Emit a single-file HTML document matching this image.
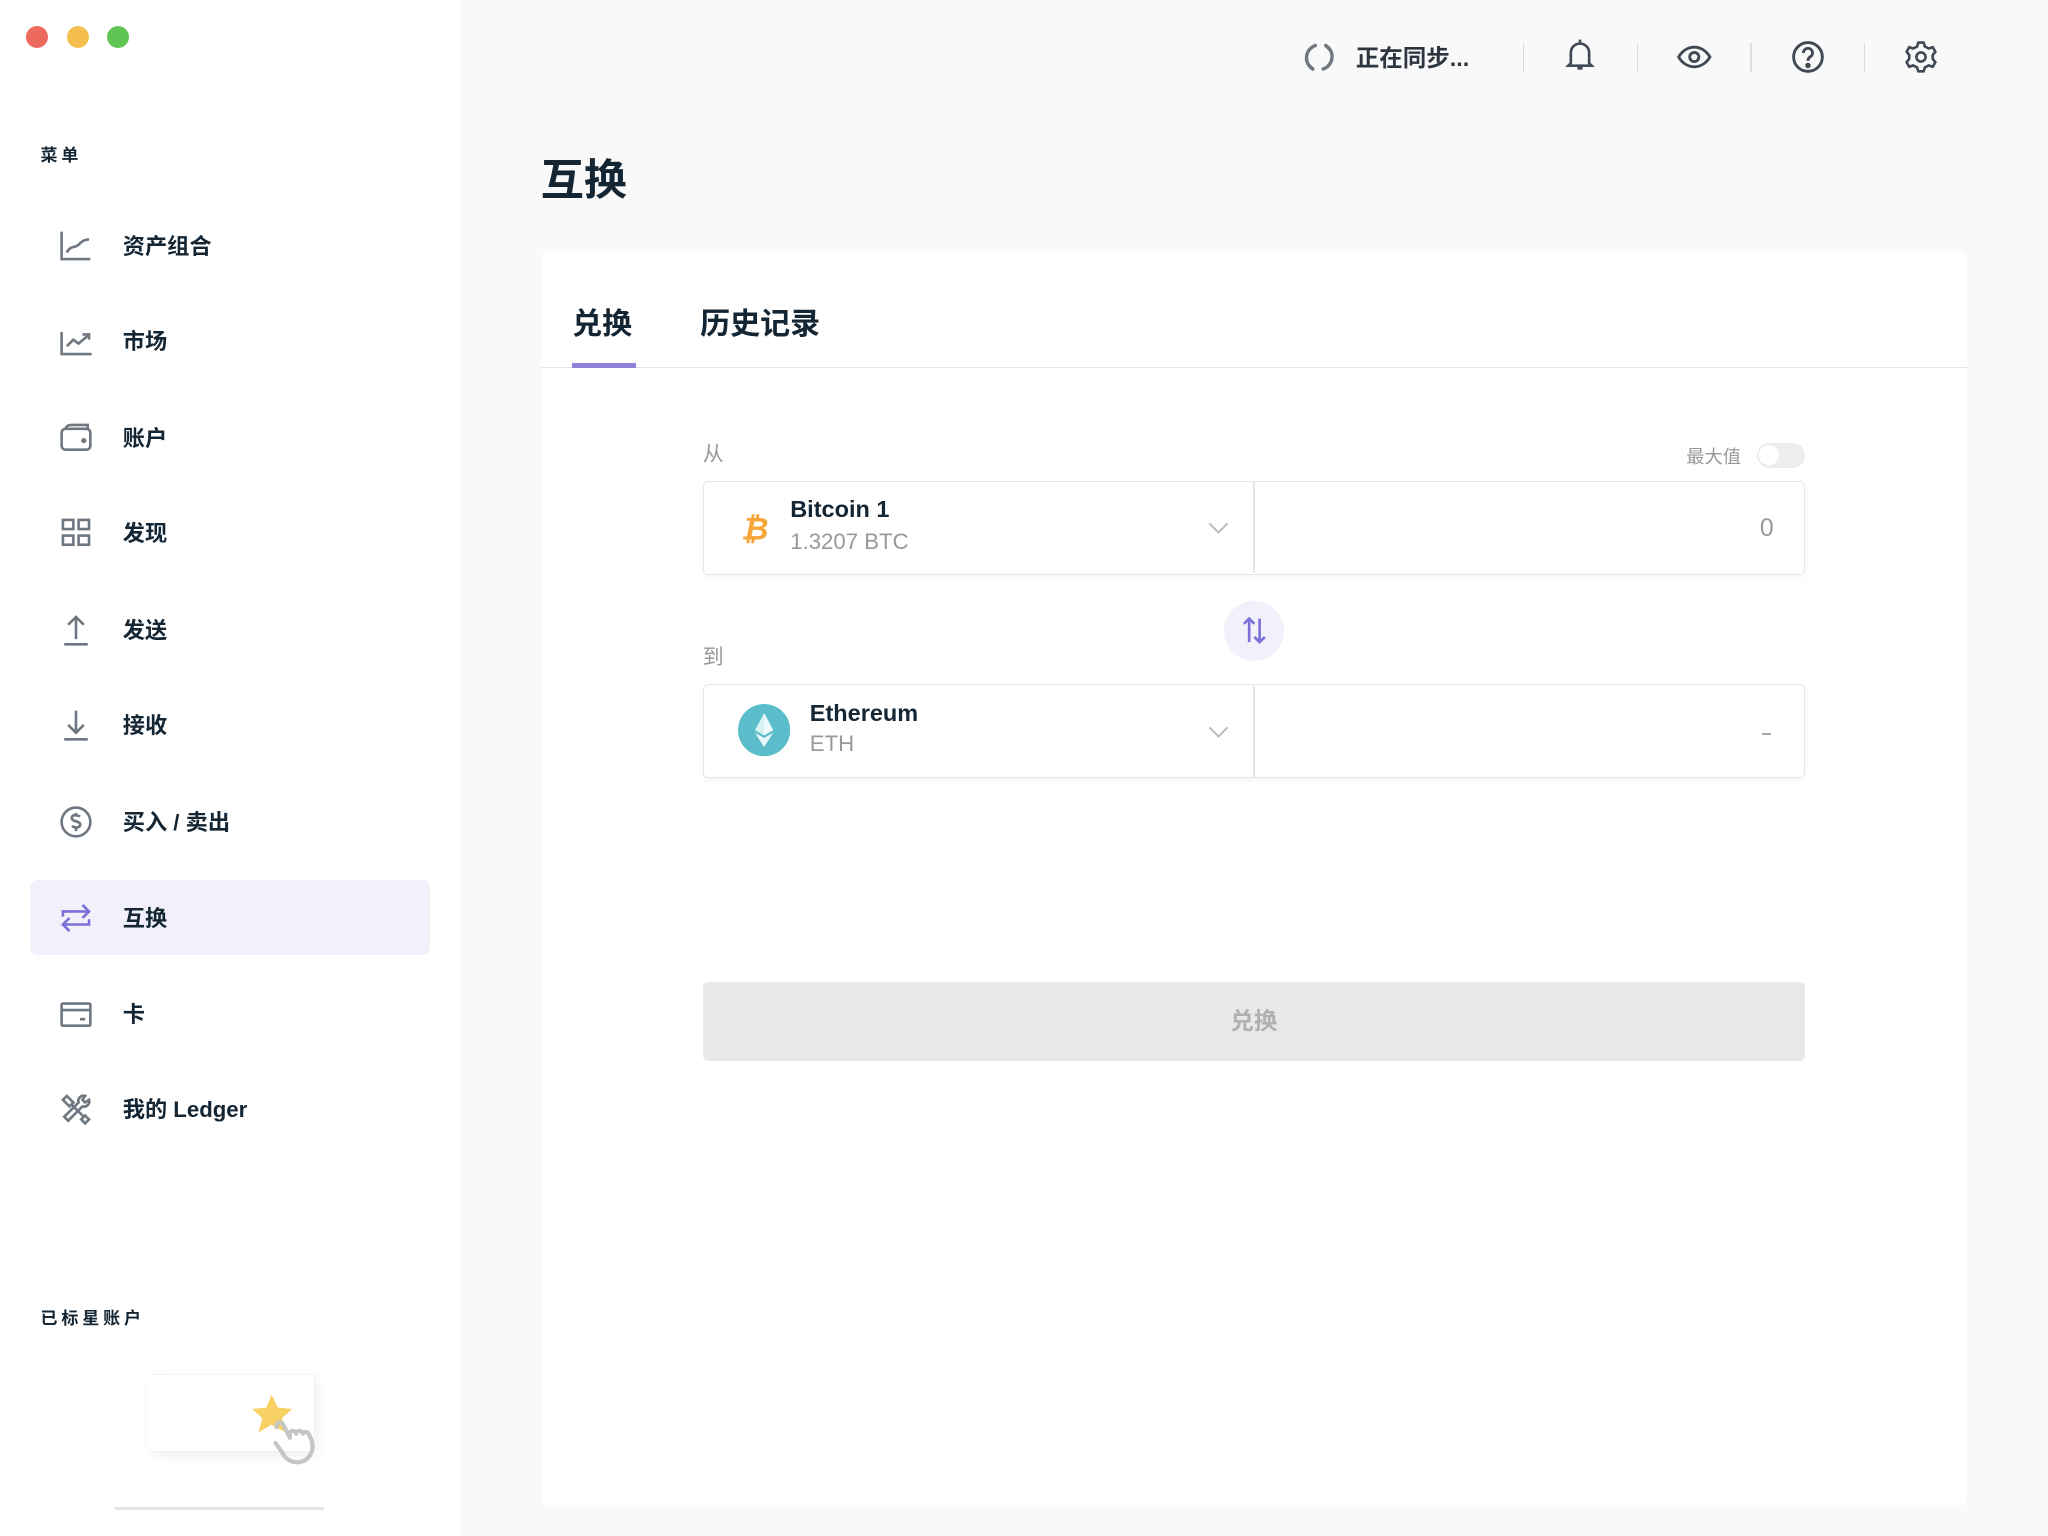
<!DOCTYPE html>
<html><head><meta charset="utf-8">
<style>
*{margin:0;padding:0;box-sizing:border-box}
html,body{width:2048px;height:1536px;overflow:hidden;background:#fff}
#w{zoom:1.306122;width:1568px;height:1176px;position:relative;background:#f9f9f9;font-family:"Liberation Sans","Noto Sans CJK SC",sans-serif;color:#142533}
.a{position:absolute}
#side{left:0;top:0;width:352px;height:1176px;background:#fff}
.dot{width:17px;height:17px;border-radius:50%;top:20px}
.cap{font-size:13px;font-weight:700;letter-spacing:3px;color:#142533}
.nav{left:23px;width:306px;height:57px;border-radius:6px}
.nav svg{position:absolute;left:22px;top:16px}
.nav span{position:absolute;left:71px;top:16px;font-size:17px;font-weight:600;color:#142533}
.act{background:#f1f0fb}
.sep{width:1px;height:22px;background:#ddd;top:33px}
.ic{top:30px}
.lbl{font-size:16px;color:#999}
.box{background:#fff;border:1px solid #e6e6e6;border-radius:4px;box-shadow:0 2px 4px rgba(0,0,0,.04)}
</style></head><body><div id="w">
<div id="side" class="a">
 <div class="a dot" style="left:20px;background:#ee6a5f"></div>
 <div class="a dot" style="left:51px;background:#f5bf4f"></div>
 <div class="a dot" style="left:82px;background:#61c554"></div>
 <div class="a cap" style="left:31px;top:108px">菜单</div>

 <div class="a nav" style="top:159px"><svg width="26" height="26" viewBox="0 0 26 26" fill="none" stroke="#6f7780" stroke-width="2"><path d="M2 2v21h22M6 18c3-6 6-3 9-6s5-4 8-4"/></svg><span>资产组合</span></div>
 <div class="a nav" style="top:232px"><svg width="26" height="26" viewBox="0 0 26 26" fill="none" stroke="#6f7780" stroke-width="2"><path d="M2 6v17h23M6 17l5-5 4 3 7-6M18 8h5v4"/></svg><span>市场</span></div>
 <div class="a nav" style="top:306px"><svg width="26" height="26" viewBox="0 0 26 26" fill="none" stroke="#6f7780" stroke-width="2"><rect x="2" y="6" width="22" height="16" rx="3"/><path d="M5 6c1-3 3-3 6-3h11v3"/><circle cx="19" cy="15" r="1" fill="#6f7780"/></svg><span>账户</span></div>
 <div class="a nav" style="top:379px"><svg width="26" height="26" viewBox="0 0 26 26" fill="none" stroke="#6f7780" stroke-width="2"><rect x="3" y="3" width="8" height="7"/><rect x="15" y="3" width="8" height="7"/><rect x="3" y="15" width="8" height="7"/><rect x="15" y="15" width="8" height="7"/></svg><span>发现</span></div>
 <div class="a nav" style="top:453px"><svg width="26" height="26" viewBox="0 0 26 26" fill="none" stroke="#6f7780" stroke-width="2"><path d="M13 3v17M7 9l6-6 6 6M4 24h18"/></svg><span>发送</span></div>
 <div class="a nav" style="top:526px"><svg width="26" height="26" viewBox="0 0 26 26" fill="none" stroke="#6f7780" stroke-width="2"><path d="M13 2v17M7 13l6 6 6-6M4 24h18"/></svg><span>接收</span></div>
 <div class="a nav" style="top:600px"><svg width="26" height="26" viewBox="0 0 26 26" fill="none" stroke="#6f7780" stroke-width="2"><circle cx="13" cy="13" r="11"/><path d="M16 9c-1-1-5-2-6 0s1 3 3 3.5 4 1.5 3 3.5-5 1-6 0M13 6v2M13 18v2"/></svg><span>买入 / 卖出</span></div>
 <div class="a nav act" style="top:674px"><svg width="26" height="26" viewBox="0 0 26 26" fill="none" stroke="#7b6fd8" stroke-width="2"><path d="M3 12V8h20M18 3l5 5-5 5M23 14v4H3M8 13l-5 5 5 5"/></svg><span>互换</span></div>
 <div class="a nav" style="top:747px"><svg width="26" height="26" viewBox="0 0 26 26" fill="none" stroke="#6f7780" stroke-width="2"><rect x="2" y="5" width="22" height="17" rx="1"/><path d="M2 10h22M16 17h4"/></svg><span>卡</span></div>
 <div class="a nav" style="top:820px"><svg width="26" height="26" viewBox="0 0 26 26" fill="none" stroke="#6f7780" stroke-width="2"><path d="M3 6l3-3 5 5-3 3zM9 9l10 10M17 21l3-3 3 3-3 3zM20 3a4 4 0 0 0-5 5L4 19l3 3 11-11a4 4 0 0 0 5-5l-3 2-2-2z"/></svg><span>我的 Ledger</span></div>

 <div class="a cap" style="left:31px;top:998px">已标星账户</div>
 <div class="a" style="left:113px;top:1052px;width:128px;height:60px;background:#fff;border-radius:4px;box-shadow:2px 3px 8px rgba(0,0,0,.06);border:1px solid #f2f2f2;border-left:none"></div>
 <svg class="a" style="left:190px;top:1066px" width="64" height="66" viewBox="0 0 64 66"><path d="M18 2l5 10 11 1-8 7 3 11-11-6-10 6 3-11-8-7 11-1z" fill="#f7d163"/><path d="M22 27c-1-4 3-5 5-2l5 10v-3c0-3 4-3 5 0 0-3 4-3 5 0 0-2 4-2 5 1 4 7 3 15-3 19-7 4-15 1-18-6l-5-7" fill="none" stroke="#c5c5c5" stroke-width="3.2" stroke-linecap="round" stroke-linejoin="round"/></svg>
 <div class="a" style="left:88px;top:1154px;width:160px;height:2px;background:#ccc;opacity:.5"></div>
</div>

<!-- top bar -->
<svg class="a ic" style="left:996px;top:30px" width="28" height="28" viewBox="0 0 28 28" fill="none" stroke="#6f7780" stroke-width="2.6" stroke-linecap="round"><path d="M11 5a10 10 0 0 0-2 18"/><path d="M6 20l3 3"/><path d="M17 23a10 10 0 0 0 2-18"/><path d="M22 8l-3-3"/></svg>
<div class="a" style="left:1038px;top:30px;font-size:18px;font-weight:600;color:#2c3540">正在同步...</div>
<div class="a sep" style="left:1166px"></div>
<svg class="a ic" style="left:1197px;top:28px" width="26" height="28" viewBox="0 0 26 28" fill="none" stroke="#3f4853" stroke-width="2"><path d="M13 2v2M6 20V12a7 7 0 0 1 14 0v8l2 2H4zM11 24h4"/></svg>
<div class="a sep" style="left:1253px"></div>
<svg class="a ic" style="left:1283px;top:31px" width="28" height="26" viewBox="0 0 28 26" fill="none" stroke="#3f4853" stroke-width="2.2"><path d="M2 13c6-10 18-10 24 0-6 10-18 10-24 0z"/><circle cx="14" cy="13" r="3.5"/></svg>
<div class="a sep" style="left:1340px"></div>
<svg class="a ic" style="left:1371px;top:31px" width="26" height="26" viewBox="0 0 26 26" fill="none" stroke="#3f4853" stroke-width="2.2"><circle cx="13" cy="13" r="11"/><path d="M9.5 10a3.5 3.5 0 1 1 5 3c-1.5 1-1.5 2-1.5 3"/><circle cx="13" cy="19.5" r="1" fill="#3f4853"/></svg>
<div class="a sep" style="left:1427px"></div>
<svg class="a ic" style="left:1458px;top:31px" width="26" height="26" viewBox="0 0 26 26" fill="none" stroke="#3f4853" stroke-width="2"><path d="M11 2h4l1 3 3 1.5 3-1 2 3.5-2 2.5v3l2 2.5-2 3.5-3-1-3 1.5-1 3h-4l-1-3-3-1.5-3 1-2-3.5 2-2.5v-3l-2-2.5 2-3.5 3 1 3-1.5z"/><circle cx="13" cy="13" r="3.5"/></svg>

<div class="a" style="left:414px;top:112px;font-size:33px;font-weight:700;color:#142533">互换</div>

<div class="a" style="left:414px;top:193px;width:1092px;height:959px;background:#fff;border-radius:4px">
 <div class="a" style="left:24px;top:36px;font-size:23px;font-weight:700">兑换</div>
 <div class="a" style="left:122px;top:36px;font-size:23px;font-weight:600">历史记录</div>
 <div class="a" style="left:0;top:88px;width:1092px;height:1px;background:#e5e5e5"></div>
 <div class="a" style="left:24px;top:85px;width:49px;height:4px;background:#8d80d6"></div>
</div>

<div class="a lbl" style="left:538px;top:335px">从</div>
<div class="a" style="left:1291px;top:339px;font-size:14px;color:#999">最大值</div>
<div class="a" style="left:1345px;top:339px;width:37px;height:19px;border-radius:10px;background:#ededed"><div class="a" style="left:2px;top:2px;width:15px;height:15px;border-radius:50%;background:#fff"></div></div>

<div class="a box" style="left:538px;top:368px;width:844px;height:72px"></div>
<div class="a" style="left:959px;top:369px;width:2px;height:70px;background:#e6e6e6"></div>
<svg class="a" style="left:567px;top:391px" width="22" height="26" viewBox="0 0 22 26"><text x="0" y="22" font-family="Liberation Sans" font-weight="700" font-style="italic" font-size="24" fill="#f7a73a">₿</text></svg>
<div class="a" style="left:605px;top:380px;font-size:18px;font-weight:600">Bitcoin 1</div>
<div class="a" style="left:605px;top:405px;font-size:17px;color:#999">1.3207 BTC</div>
<svg class="a" style="left:925px;top:400px" width="16" height="10" viewBox="0 0 16 10" fill="none" stroke="#bbb" stroke-width="1.5"><path d="M1 1l7 7 7-7"/></svg>
<div class="a" style="left:1300px;top:394px;width:58px;text-align:right;font-size:19px;color:#999">0</div>

<div class="a" style="left:937px;top:460px;width:46px;height:46px;border-radius:50%;background:#f1f0fb"></div>
<svg class="a" style="left:949px;top:472px" width="22" height="22" viewBox="0 0 22 22" fill="none" stroke="#7b6fd8" stroke-width="2"><path d="M7 20V2M3 6l4-4 4 4M15 2v18M11 16l4 4 4-4"/></svg>

<div class="a lbl" style="left:538px;top:491px">到</div>
<div class="a box" style="left:538px;top:524px;width:844px;height:72px"></div>
<div class="a" style="left:959px;top:525px;width:2px;height:71px;background:#e6e6e6"></div>
<svg class="a" style="left:565px;top:539px" width="40" height="40" viewBox="0 0 40 40"><circle cx="20" cy="20" r="20" fill="#5bbcca"/><path d="M20 7l-7 13 7 4 7-4z" fill="#d8f1f4"/><path d="M20 7v17l7-4z" fill="#fff" opacity=".6"/><path d="M13 22l7 11 7-11-7 4z" fill="#e8f7f9"/></svg>
<div class="a" style="left:620px;top:536px;font-size:18px;font-weight:600">Ethereum</div>
<div class="a" style="left:620px;top:560px;font-size:17px;color:#999">ETH</div>
<svg class="a" style="left:925px;top:556px" width="16" height="10" viewBox="0 0 16 10" fill="none" stroke="#bbb" stroke-width="1.5"><path d="M1 1l7 7 7-7"/></svg>
<div class="a" style="left:1349px;top:561px;width:7px;height:2px;background:#aaa"></div>

<div class="a" style="left:538px;top:752px;width:844px;height:60px;background:#e8e8ea;border-radius:4px;text-align:center;line-height:60px;font-size:18px;color:#b0b0b0;font-weight:600">兑换</div>
</div></body></html>
